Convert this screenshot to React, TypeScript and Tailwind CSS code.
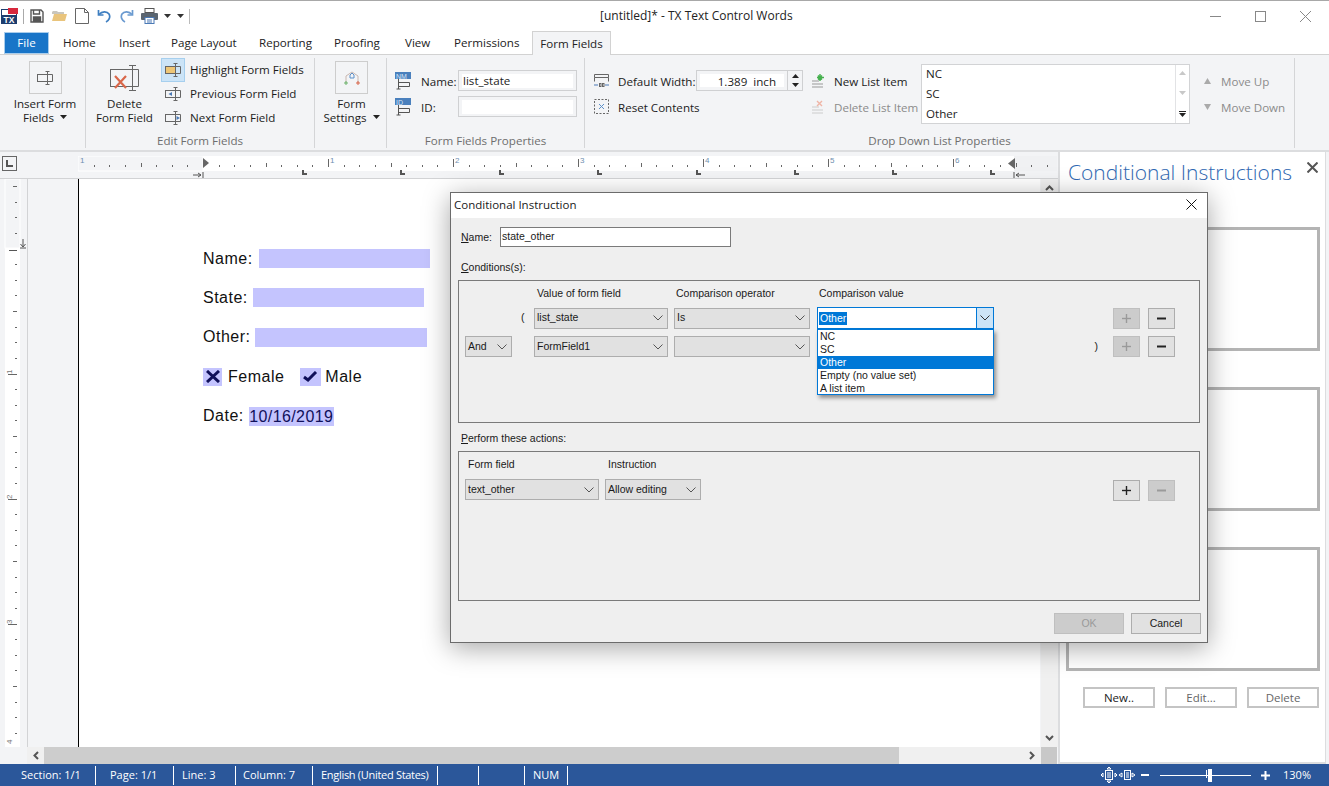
import React from "react";

const Caret = ({ c = "#222" }: { c?: string }) => (
  <svg width="7" height="4" viewBox="0 0 7 4" className="inline-block"><path d="M0 0h7L3.5 4z" fill={c} /></svg>
);
const Chev = ({ c = "#555" }: { c?: string }) => (
  <svg width="10" height="6" viewBox="0 0 10 6" fill="none" stroke={c}><path d="M0.5 0.5L5 5L9.5 0.5" /></svg>
);
const FieldGlyph = ({ fill = "none", arrow }: { fill?: string; arrow?: "l" | "r" }) => (
  <svg width="16" height="14" viewBox="0 0 16 14" fill="none" stroke="#666">
    <rect x="0.5" y="3.5" width="10" height="7" fill={fill} />
    <path d="M10.5 0.5V13.5M8.5 0.5h4M8.5 13.5h4M10.5 3.5h5v7h-5" />
    {arrow === "l" && <path d="M7 5v4L3.5 7z" fill="#4a79b5" stroke="none" />}
    {arrow === "r" && <path d="M11.5 5v4L15 7z" fill="#4a79b5" stroke="none" />}
  </svg>
);
const PropIcon = ({ t }: { t: string }) => (
  <svg width="17" height="18" viewBox="0 0 17 18" fill="none" stroke="#555">
    <path d="M0 0h16v7H0z" fill="#4a80bd" stroke="none" />
    <text x="1" y="6.5" fontSize="7" fill="#d7e6f7" stroke="none" fontFamily="Liberation Sans">{t}</text>
    <path d="M3.5 7v10M1.5 17h4M3.5 10.5h11v4h-11" />
  </svg>
);

const Tool = ({ children, w = "w-[23px]" }: { children: React.ReactNode; w?: string }) => (
  <div className={`${w} flex items-center justify-center shrink-0`}>{children}</div>
);

function TitleBar() {
  return (
    <div className="h-[31px] shrink-0 bg-white border-t border-[#a8a8a8] flex items-center text-[12px] text-[#222]">
      <div className="w-[190px] flex items-center pl-px">
        <svg width="17" height="16" viewBox="0 0 17 16" className="shrink-0">
          <rect x="0.5" y="1.5" width="15" height="14" fill="#fff" stroke="#1d3d6e" />
          <rect x="7" y="0" width="10" height="6" fill="#d8283c" />
          <rect x="1" y="7" width="14" height="8" fill="#1d3d6e" />
          <text x="2.5" y="14.5" fontSize="8.5" fontWeight="700" fill="#fff" fontFamily="Liberation Sans">TX</text>
        </svg>
        <div className="w-px h-[15px] bg-[#aaa] ml-[5px] mr-[6px]" />
        <Tool w="w-[14px]">
          <svg width="14" height="14" viewBox="0 0 14 14" fill="none" stroke="#555" strokeWidth="1.4">
            <path d="M1 1h10l2 2v10H1z" /><path d="M3.5 1v4h6V1" /><path d="M3.5 13V8h7v5" fill="#555" />
          </svg>
        </Tool>
        <div className="w-[9px]" />
        <Tool w="w-[15px]">
          <svg width="15" height="12" viewBox="0 0 15 12"><path d="M0 2l1-1h4l1 1h6v2H0z" fill="#c9c6bd" /><path d="M0 11l2-7h13l-2 7z" fill="#e9c47c" /></svg>
        </Tool>
        <div className="w-[8px]" />
        <Tool w="w-[14px]">
          <svg width="14" height="16" viewBox="0 0 14 16" fill="none" stroke="#666"><path d="M0.5 0.5h9l4 4v11H.5z" /><path d="M9.5 0.5v4h4" /></svg>
        </Tool>
        <div className="w-[9px]" />
        <Tool w="w-[14px]">
          <svg width="14" height="14" viewBox="0 0 14 14" fill="none" stroke="#3f7fc1" strokeWidth="1.7"><path d="M1.500 1v5h5" /><path d="M2 5.500C5 2 10 2 12 5c1.800 3-.2 6.500-3 8" /></svg>
        </Tool>
        <div className="w-[9px]" />
        <Tool w="w-[14px]">
          <svg width="14" height="14" viewBox="0 0 14 14" fill="none" stroke="#6a9ad0" strokeWidth="1.7"><path d="M12.500 1v5h-5" /><path d="M12 5.500C9 2 4 2 2 5c-1.800 3 .2 6.500 3 8" /></svg>
        </Tool>
        <div className="w-[8px]" />
        <Tool w="w-[17px]">
          <svg width="17" height="16" viewBox="0 0 17 16"><rect x="4" y="0.500" width="9" height="4" fill="none" stroke="#555" /><rect x="0" y="5" width="17" height="7" rx="1" fill="#5b6570" /><rect x="4" y="9.500" width="9" height="6" fill="#fff" stroke="#4a79b5" /><path d="M6 12h5M6 14h5" stroke="#4a79b5" /></svg>
        </Tool>
        <div className="ml-[6px] flex items-center gap-[6px]"><Caret c="#333" /><Caret c="#333" /></div>
        <div className="w-px h-[15px] bg-[#bbb] ml-[5px]" />
      </div>
      <div className="pl-[410px] whitespace-nowrap">[untitled]* - TX Text Control Words</div>
      <div className="ml-auto flex items-center pr-[18px] gap-[34px]">
        <svg width="11" height="11" viewBox="0 0 11 11" stroke="#888"><path d="M0 5.500h11" /></svg>
        <svg width="11" height="11" viewBox="0 0 11 11" fill="none" stroke="#888"><rect x="0.500" y="0.500" width="10" height="10" /></svg>
        <svg width="11" height="11" viewBox="0 0 11 11" stroke="#888"><path d="M0 0l11 11M11 0L0 11" /></svg>
      </div>
    </div>
  );
}

function Tabs() {
  const tabs: [string, string][] = [
    ["Home", "w-[56px]"], ["Insert", "w-[52px]"], ["Page Layout", "w-[88px]"], ["Reporting", "w-[75px]"],
    ["Proofing", "w-[71px]"], ["View", "w-[49px]"], ["Permissions", "w-[83px]"],
  ];
  return (
    <div className="h-[24px] shrink-0 bg-white border-b border-[#d2d2d2] flex items-stretch text-[11.6px] text-[#222]">
      <div className="ml-[4px] w-[45px] bg-[#1975c8] border border-[#a9cdec] text-white flex items-center justify-center mt-px">File</div>
      <div className="w-[9px]" />
      {tabs.map(([t, w]) => (
        <div key={t} className={`${w} flex items-center pl-[5px] whitespace-nowrap`}>{t}</div>
      ))}
      <div className="w-[79px] -mb-px bg-[#f3f4f6] border border-b-0 border-[#d2d2d2] flex items-center justify-center whitespace-nowrap z-10">Form Fields</div>
    </div>
  );
}

const Group = ({ w, label, children }: { w: string; label: string; children: React.ReactNode }) => (
  <div className={`${w} shrink-0 h-[90px] mt-[3px] border-r border-[#d4d5d7] flex flex-col`}>
    <div className="h-[75px] relative flex">{children}</div>
    <div className="h-[15px] text-center text-[#6e6e6e] leading-[15px] whitespace-nowrap">{label}</div>
  </div>
);
const Inset = ({ w, children }: { w: string; children?: React.ReactNode }) => (
  <div className={`${w} h-[21px] border border-[#cfd0d2] p-[3px] flex items-center`}>
    <div className="bg-white h-[14px] flex-1 flex items-center pl-px pt-px leading-none whitespace-nowrap">{children}</div>
  </div>
);

function Ribbon() {
  return (
    <div className="h-[97px] shrink-0 bg-[#f3f4f6] border-b-2 border-[#dcdddf] flex text-[11.6px] text-[#1c1c1c] leading-[14px]">
      <Group w="w-[86px]" label="">
        <div className="w-full flex flex-col items-center pt-[3px] pl-[5px]">
          <div className="w-[33px] h-[33px] border border-[#cdcdcd] flex items-center justify-center mb-[3px]"><FieldGlyph /></div>
          <div className="whitespace-nowrap">Insert Form</div>
          <div>Fields <span className="ml-[3px] relative -top-[2px]"><Caret /></span></div>
        </div>
      </Group>
      <Group w="w-[229px]" label="Edit Form Fields">
        <div className="w-[75px] flex flex-col items-center pl-[2px] pt-[7px]">
          <svg width="30" height="26" viewBox="0 0 30 26" fill="none" stroke="#666" className="mb-[6px]">
            <rect x="0.500" y="4.500" width="22" height="17" />
            <path d="M22.500 .5V25.500M19 .5h7M19 25.500h7M22.500 4.500h6v17h-6" />
            <path d="M5 11l11 12M16 11L5 23" stroke="#d9674a" strokeWidth="2.200" />
          </svg>
          <div>Delete</div>
          <div className="whitespace-nowrap">Form Field</div>
        </div>
        <div className="flex flex-col">
          {[["Highlight Form Fields", "#eec676", undefined], ["Previous Form Field", "none", "l"], ["Next Form Field", "none", "r"]].map(([t, f, a], i) => (
            <div key={String(t)} className="h-[24px] flex items-center">
              <div className={`w-[24px] h-[24px] flex items-center justify-center border ${i === 0 ? "bg-[#cce4f7] border-[#a6cfee]" : "border-transparent"}`}>
                <FieldGlyph fill={f as string} arrow={a as "l" | "r" | undefined} />
              </div>
              <span className="ml-[5px] whitespace-nowrap">{t}</span>
            </div>
          ))}
        </div>
      </Group>
      <Group w="w-[72px]" label="">
        <div className="w-full flex flex-col items-center pt-[3px] pl-[2px]">
          <div className="w-[33px] h-[33px] border border-[#cdcdcd] flex items-center justify-center mb-[3px]">
            <svg width="16" height="16" viewBox="0 0 16 16" fill="none">
              <path d="M2 13V6l6-4 6 4v7" stroke="#c9b7b0" /><path d="M6 5l2-2 2 2v3H6z" stroke="#5b8fc9" />
              <path d="M1 12h2v2H1z" stroke="#6bb36b" /><path d="M13 12h2v2h-2z" stroke="#d9674a" />
            </svg>
          </div>
          <div>Form</div>
          <div>Settings <span className="ml-[3px] relative -top-[2px]"><Caret /></span></div>
        </div>
      </Group>
      <Group w="w-[198px]" label="Form Fields Properties">
        <div className="flex flex-col pl-[8px] pt-[12px] gap-[5px]">
          <div className="flex items-center h-[21px]">
            <PropIcon t="NM" />
            <span className="ml-[9px] w-[37px] pt-[2px]">Name:</span>
            <Inset w="w-[119px]">list_state</Inset>
          </div>
          <div className="flex items-center h-[21px]">
            <PropIcon t="ID" />
            <span className="ml-[9px] w-[37px] pt-[2px]">ID:</span>
            <Inset w="w-[119px]" />
          </div>
        </div>
      </Group>
      <Group w="w-[710px]" label="Drop Down List Properties">
        <div className="w-[227px] flex flex-col pl-[9px] pt-[12px] gap-[5px] shrink-0">
          <div className="flex items-center h-[21px]">
            <svg width="15" height="14" viewBox="0 0 15 14" fill="none" stroke="#666" className="shrink-0">
              <path d="M.5 .5h14v3H.5zM.5 3.500v4M14.500 3.500v4" /><path d="M0 11h4M11 11h4" stroke="#4a79b5" /><rect x="5.500" y="9.500" width="1.500" height="3" /><rect x="8.500" y="9.500" width="1.500" height="3" />
            </svg>
            <span className="ml-[9px] w-[78px] pt-[2px] whitespace-nowrap">Default Width:</span>
            <div className="w-[107px] h-[21px] border border-[#cfd0d2] flex">
              <div className="flex-1 m-[3px] bg-white text-right pr-[8px] leading-[15px] whitespace-pre">1.389  inch</div>
              <div className="w-[15px] border-l border-[#cfd0d2] flex flex-col items-center justify-center gap-[5px]">
                <svg width="7" height="4" viewBox="0 0 7 4"><path d="M3.500 0L7 4H0z" fill="#222" /></svg>
                <Caret />
              </div>
            </div>
          </div>
          <div className="flex items-center h-[21px]">
            <svg width="15" height="15" viewBox="0 0 15 15" fill="none" stroke="#666" strokeDasharray="2 1.500" className="shrink-0">
              <rect x="0.500" y="0.500" width="14" height="14" /><path d="M5 5l5 5M10 5l-5 5" stroke="#5b8fc9" strokeDasharray="none" />
            </svg>
            <span className="ml-[9px] pt-[2px] whitespace-nowrap">Reset Contents</span>
          </div>
        </div>
        <div className="w-[109px] flex flex-col pt-[12px] gap-[5px] shrink-0">
          <div className="flex items-center h-[21px]">
            <svg width="13" height="14" viewBox="0 0 13 14" className="shrink-0"><path d="M0 7h7M0 10h11M0 13h11" stroke="#999" /><path d="M8 0v7M5 3.500h7M6 1.500l4 4M10 1.500l-4 4" stroke="#45b04e" strokeWidth="1.400" /></svg>
            <span className="ml-[9px] pt-[2px] whitespace-nowrap">New List Item</span>
          </div>
          <div className="flex items-center h-[21px] text-[#8b8b8b]">
            <svg width="13" height="14" viewBox="0 0 13 14" className="shrink-0"><path d="M0 7h7M0 10h11M0 13h11" stroke="#ccc" /><path d="M5 1l5 5M10 1L5 6" stroke="#efb5a6" strokeWidth="1.400" /></svg>
            <span className="ml-[9px] pt-[2px] whitespace-nowrap">Delete List Item</span>
          </div>
        </div>
        <div className="w-[269px] h-[60px] mt-[6px] bg-white border border-[#d2d3d5] flex shrink-0">
          <div className="flex-1 pl-[4px] flex flex-col justify-between leading-[20px] -mt-px pb-px"><div>NC</div><div>SC</div><div>Other</div></div>
          <div className="w-[14px] border-l border-[#e2e3e5] flex flex-col items-center justify-between py-[6px]">
            <svg width="7" height="4" viewBox="0 0 7 4"><path d="M3.500 0L7 4H0z" fill="#c8c8c8" /></svg>
            <Caret c="#c8c8c8" />
            <svg width="7" height="6" viewBox="0 0 7 6"><path d="M0 0h7v1H0zM0 2h7L3.500 6z" fill="#222" /></svg>
          </div>
        </div>
        <div className="pl-[14px] flex flex-col pt-[12px] gap-[5px] text-[#8b8b8b]">
          <div className="flex items-center h-[21px]">
            <svg width="7" height="6" viewBox="0 0 7 6"><path d="M3.500 0L7 6H0z" fill="#aaa" /></svg>
            <span className="ml-[10px] pt-[2px] whitespace-nowrap">Move Up</span>
          </div>
          <div className="flex items-center h-[21px]">
            <svg width="7" height="6" viewBox="0 0 7 6"><path d="M0 0h7L3.500 6z" fill="#aaa" /></svg>
            <span className="ml-[10px] pt-[2px] whitespace-nowrap">Move Down</span>
          </div>
        </div>
      </Group>
    </div>
  );
}

const Tab = ({ x, y }: { x: number; y: number }) => (
  <path d={`M${x} ${y}h2v3h3v2h-5z`} fill="#555" />
);

function HRuler() {
  const xs = Array.from({ length: 68 }, (_, i) => -8 * 15.625 + i * 15.625);
  const nums: [string, number][] = [["1", 0], ["1", 250], ["2", 375], ["3", 500], ["4", 625], ["5", 750], ["6", 875]];
  return (
    <svg width="979" height="22" viewBox="0 0 979 22" className="block">
      <rect x="0" y="0" width="125" height="15" fill="#f3f4f6" stroke="#fff" />
      <rect x="125" y="0" width="811" height="15" fill="#fff" />
      <rect x="936" y="0" width="43" height="15" fill="#f0f1f3" />
      {xs.map((v, i) => {
        const x = Math.round(125 + v);
        if (x < 2 || x > 975 || i === 8) return null;
        const k = i % 8;
        if (k === 0) return <rect key={i} x={x} y={3} width={1} height={8} fill="#666" />;
        if (k === 4) return <rect key={i} x={x} y={7} width={1} height={4} fill="#666" />;
        return <rect key={i} x={x} y={9} width={1} height={2} fill="#666" />;
      })}
      {nums.map(([t, x], i) => (
        <text key={i} x={x + 2} y={7} fontSize="8" fill="#6f8fb0" fontFamily="Liberation Sans">{t}</text>
      ))}
      {[224, 322, 421, 519, 618, 716, 814, 912].map((x) => <Tab key={x} x={x} y={14} />)}
      <path d="M125 2l6 5-6 5z" fill="#666" />
      <path d="M937 2l-7 5.500 7 5.500z" fill="#666" />
      <path d="M115 19h8M120 17l3 2-3 2M125 16v6" stroke="#555" fill="none" />
      <path d="M936 16v6M947 19h-9M941 17l-3 2 3 2" stroke="#555" fill="none" />
    </svg>
  );
}

function VRuler() {
  const ys = Array.from({ length: 40 }, (_, i) => i);
  return (
    <svg width="27" height="569" viewBox="0 0 27 569" className="block shrink-0">
      <rect x="5" y="0" width="15" height="69" fill="#f3f4f6" stroke="#fff" />
      <rect x="5" y="69" width="15" height="500" fill="#fff" />
      {ys.map((i) => {
        const y = Math.round(7 + i * 15.625);
        if (y > 566) return null;
        const k = (i - 4) % 8;
        if (i === 4) return <rect key={i} x={9} y={y + 1} width={8} height={1} fill="#555" />;
        if (k === 0) return <rect key={i} x={8} y={y} width={9} height={1} fill="#666" />;
        if (k === 4 || k === -4) return <rect key={i} x={13} y={y} width={4} height={1} fill="#666" />;
        return <rect key={i} x={15} y={y} width={2} height={1} fill="#666" />;
      })}
      {[["1", 195], ["2", 320], ["3", 445], ["4", 570]].map(([t, y]) => (
        <text key={t} x={0} y={0} fontSize="8" fill="#777" fontFamily="Liberation Sans" transform={`translate(12 ${Number(y) - (t === "4" ? 5 : 0)}) rotate(-90)`}>{t}</text>
      ))}
      <path d="M23 60v8M20.500 65l2.500 3 2.500-3M20 69h6" stroke="#555" fill="none" />
    </svg>
  );
}

const Blue = "bg-[#c4c4fe]";
const DocRow = ({ children }: { children: React.ReactNode }) => (
  <div className="h-[19px] mb-[20.4px] flex items-center whitespace-nowrap">{children}</div>
);

function Page() {
  return (
    <div className="flex-1 bg-white border-l border-black pl-[124px] pt-[70px] font-['Liberation_Sans',Arial,sans-serif] text-[16px] tracking-[0.5px] text-[#111] overflow-hidden">
      <DocRow>Name:<div className={`${Blue} w-[171px] h-[19px] ml-[6px]`} /></DocRow>
      <DocRow>State:<div className={`${Blue} w-[171px] h-[19px] ml-[5px]`} /></DocRow>
      <DocRow>Other:<div className={`${Blue} w-[172px] h-[19px] ml-[5px]`} /></DocRow>
      <DocRow>
        <div className={`${Blue} w-[19px] h-[18px] flex items-center justify-center`}>
          <svg width="14" height="13" viewBox="0 0 14 13" stroke="#10105a" strokeWidth="3"><path d="M1 1l12 11M13 1L1 12" /></svg>
        </div>
        <span className="ml-[6px]">Female</span>
        <div className={`${Blue} w-[21px] h-[18px] ml-[16px] flex items-center justify-center`}>
          <svg width="15" height="11" viewBox="0 0 15 11" fill="none" stroke="#10105a" strokeWidth="3"><path d="M1 6l4 3 8-8" /></svg>
        </div>
        <span className="ml-[4px]">Male</span>
      </DocRow>
      <DocRow>Date:<span className={`${Blue} ml-[5px] w-[85px] text-center h-[19px] leading-[19px] tracking-[0.4px] text-[#10105a]`}>10/16/2019</span></DocRow>
    </div>
  );
}

function Workspace() {
  return (
    <div className="w-[1058px] shrink-0 flex flex-col">
      <div className="h-[26px] shrink-0 flex bg-[#f3f4f6]">
        <div className="ml-[2px] mt-[4px] w-[15px] h-[15px] border border-[#666] flex items-center justify-center">
          <svg width="7" height="7" viewBox="0 0 7 7"><path d="M0 0h2v5h5v2H0z" fill="#555" /></svg>
        </div>
        <div className="ml-[61px] mt-[4px]"><HRuler /></div>
      </div>
      <div className="flex-1 flex min-h-0 border-t border-[#d2d3d5]">
        <VRuler />
        <div className="w-[51px] bg-[#f3f4f6] border-l border-[#d2d3d5]" />
        <Page />
        <div className="w-[17px] ml-px bg-[#f0f0f0] flex flex-col items-center justify-between py-[6px] shrink-0">
          <svg width="9" height="6" viewBox="0 0 9 6" fill="none" stroke="#555" strokeWidth="2"><path d="M1 5l3.500-3.500L8 5" /></svg>
          <svg width="9" height="6" viewBox="0 0 9 6" fill="none" stroke="#555" strokeWidth="2"><path d="M1 1l3.500 3.500L8 1" /></svg>
        </div>
      </div>
      <div className="h-[17px] shrink-0 flex bg-[#f3f4f6]">
        <div className="w-[27px]" />
        <div className="w-[1014px] bg-[#f0f0f0] flex items-center">
          <div className="w-[17px] flex justify-center">
            <svg width="6" height="9" viewBox="0 0 6 9" fill="none" stroke="#555" strokeWidth="2"><path d="M5 1L1.500 4.500 5 8" /></svg>
          </div>
          <div className="w-[855px] h-full bg-[#cdcdcd]" />
          <div className="flex-1 flex justify-end pr-[6px]">
            <svg width="6" height="9" viewBox="0 0 6 9" fill="none" stroke="#555" strokeWidth="2"><path d="M1 1l3.500 3.500L1 8" /></svg>
          </div>
        </div>
        <div className="w-[16px] bg-[#c8c8c8]" />
      </div>
    </div>
  );
}

function SidePanel() {
  const Box = () => <div className="h-[124px] w-[254px] border-[3px] border-[#b4b4b4] bg-white" />;
  const Btn = ({ t, dim }: { t: string; dim?: boolean }) => (
    <div className={`w-[72px] h-[21px] border-2 border-[#c4c4c4] bg-white flex items-center justify-center ${dim ? "text-[#666]" : "text-[#222]"}`}>{t}</div>
  );
  return (
    <div className="w-[268px] shrink-0 bg-white border-l-2 border-b-2 border-r border-[#dcdddf] pl-[6px] relative text-[11.5px]">
      <div className="h-[38px] pt-[2px] pl-[2px] text-[21px] font-light leading-[37px] text-[#2f68b2] whitespace-nowrap">Conditional Instructions</div>
      <svg width="11" height="11" viewBox="0 0 11 11" stroke="#555" strokeWidth="2" className="absolute top-[10px] right-[7px]"><path d="M0.500 0.500l10 10M10.500 0.500l-10 10" /></svg>
      <div className="pt-[37px] flex flex-col gap-[36px]"><Box /><Box /><Box /></div>
      <div className="mt-[16px] pl-[17px] flex gap-[10px]"><Btn t="New.." /><Btn t="Edit..." dim /><Btn t="Delete" dim /></div>
    </div>
  );
}

function StatusBar() {
  const items: [string, string][] = [
    ["Section: 1/1", "w-[96px] pl-[21px]"], ["Page: 1/1", "w-[78px] pl-[14px]"], ["Line: 3", "w-[62px] pl-[8px]"],
    ["Column: 7", "w-[77px] pl-[7px]"], ["English (United States)", "w-[125px] pl-[8px] tracking-[-0.3px]"], ["", "w-[41px]"], ["", "w-[46px]"], ["NUM", "w-[43px] pl-[8px]"],
  ];
  return (
    <div className="h-[22px] shrink-0 bg-[#2b579a] text-white text-[11px] flex items-center">
      {items.map(([t, c], i) => (
        <div key={i} className={`${c} h-[19px] border-r border-white flex items-center whitespace-nowrap`}>{t}</div>
      ))}
      <div className="ml-auto flex items-center pr-[18px]">
        <svg width="34" height="16" viewBox="0 0 34 16" fill="none" stroke="#fff">
          <rect x="4.500" y="3.500" width="7" height="9" /><path d="M6 6h4M6 8h4M6 10h4M8 0l2 2H6zM8 16l-2-2h4zM0 8l2-2v4zM16 8l-2-2v4z" />
          <rect x="23.500" y="3.500" width="6" height="9" /><path d="M25 6h3M25 8h3M25 10h3M18 8l3-2v4zM34 8l-3-2v4z" />
        </svg>
        <div className="ml-[6px] w-[8px] h-[2px] bg-white" />
        <div className="ml-[11px] w-[91px] h-px bg-white relative">
          <div className="absolute -top-[5px] left-[46px] w-px h-[8px] bg-white" />
          <div className="absolute -top-[6px] left-[48px] w-[4px] h-[13px] bg-white" />
        </div>
        <svg width="9" height="9" viewBox="0 0 9 9" fill="#fff" className="ml-[10px]"><path d="M3.500 0h2v3.500H9v2H5.500V9h-2V5.500H0v-2h3.500z" /></svg>
        <span className="ml-[13px]">130%</span>
      </div>
    </div>
  );
}

const Sel = ({ w, t }: { w: string; t?: string }) => (
  <div className={`${w} h-[21px] bg-[#e1e1e1] border border-[#adadad] flex items-center justify-between pl-[2px] pr-[4px] shrink-0`}>
    <span className="whitespace-nowrap">{t}</span>
    <Chev />
  </div>
);
const Sq = ({ t, off }: { t: "+" | "-"; off?: boolean }) => (
  <div className={`w-[27px] h-[21px] border flex items-center justify-center shrink-0 ${off ? "bg-[#cccccc] border-[#bfbfbf]" : "bg-[#e1e1e1] border-[#adadad]"}`}>
    <svg width="9" height="9" viewBox="0 0 9 9" stroke={off ? "#9a9a9a" : "#222"} strokeWidth={t === "-" ? 2 : 1.400}>
      <path d="M0 4.500h9" />{t === "+" && <path d="M4.500 0v9" />}
    </svg>
  </div>
);

function Dialog() {
  return (
    <div className="absolute left-[450px] top-[192px] w-[758px] h-[451px] border border-[#6b6b6b] bg-[#efefef] shadow-[0_5px_25px_rgba(0,0,0,0.35)] flex flex-col font-['Liberation_Sans',Arial,sans-serif] text-[10.5px] text-[#1a1a1a]">
      <div className="h-[25px] pb-[2px] bg-white flex items-center justify-between pl-[3px] pr-[10px] text-[11.5px] font-['Open_Sans',sans-serif] shrink-0">
        <span>Conditional Instruction</span>
        <svg width="11" height="11" viewBox="0 0 11 11" stroke="#111"><path d="M0.500 0.500l10 10M10.500 0.500l-10 10" /></svg>
      </div>
      <div className="flex-1 px-[7px]">
        <div className="flex items-center mt-[9px] h-[20px]">
          <span className="ml-[3px] w-[39px] pt-[2px]"><span className="underline">N</span>ame:</span>
          <div className="w-[231px] h-[20px] bg-white border border-[#7a7a7a] flex items-center pl-[1px]">state_other</div>
        </div>
        <div className="ml-[3px] mt-[14px] h-[13px] leading-[13px]"><span className="underline">C</span>onditions(s):</div>
        <div className="relative mt-[6px] w-[742px] h-[143px] border border-[#7a7a7a]">
          <div className="flex mt-[6px] h-[14px] items-center">
            <span className="ml-[78px] w-[139px]">Value of form field</span>
            <span className="w-[143px]">Comparison operator</span>
            <span>Comparison value</span>
          </div>
          <div className="flex mt-[6px] items-center">
            <span className="ml-[62px] w-[13px]">(</span>
            <Sel w="w-[134px]" t="list_state" />
            <div className="w-[6px]" />
            <Sel w="w-[136px]" t="Is" />
            <div className="w-[7px]" />
            <div className="w-[177px] h-[22px] bg-white border border-[#0078d7] flex items-center justify-between shrink-0">
              <span className="ml-[1px] bg-[#0078d7] text-white px-px leading-[13px]">Other</span>
              <div className="w-[17px] h-full bg-[#cce4f7] border-l border-[#0078d7] flex items-center justify-center"><Chev c="#333" /></div>
            </div>
            <div className="w-[119px]" />
            <Sq t="+" off />
            <div className="w-[8px]" />
            <Sq t="-" />
          </div>
          <div className="flex mt-[7px] items-center">
            <div className="ml-[6px] w-[69px] shrink-0"><Sel w="w-[47px]" t="And" /></div>
            <Sel w="w-[134px]" t="FormField1" />
            <div className="w-[6px]" />
            <Sel w="w-[136px]" />
            <div className="w-[303px] shrink-0 text-right pr-[15px]">)</div>
            <Sq t="+" off />
            <div className="w-[8px]" />
            <Sq t="-" />
          </div>
          <div className="absolute left-[358px] top-[48px] w-[177px] h-[66px] bg-white border border-[#0078d7] shadow-[2px_3px_4px_rgba(0,0,0,0.4)] leading-[13px] z-10">
            <div className="pl-[2px]">NC</div>
            <div className="pl-[2px]">SC</div>
            <div className="pl-[2px] bg-[#0078d7] text-white">Other</div>
            <div className="pl-[2px]">Empty (no value set)</div>
            <div className="pl-[2px]">A list item</div>
          </div>
        </div>
        <div className="ml-[3px] mt-[9px] h-[13px] leading-[13px]"><span className="underline">P</span>erform these actions:</div>
        <div className="mt-[6px] w-[742px] h-[150px] border border-[#7a7a7a]">
          <div className="flex mt-[6px] h-[14px] items-center">
            <span className="ml-[9px] w-[140px]">Form field</span>
            <span>Instruction</span>
          </div>
          <div className="flex mt-[6px] items-center">
            <div className="w-[6px]" />
            <Sel w="w-[134px]" t="text_other" />
            <div className="w-[6px]" />
            <Sel w="w-[96px]" t="Allow editing" />
            <div className="w-[412px]" />
            <div className="flex pt-[2px]">
              <Sq t="+" />
              <div className="w-[8px]" />
              <Sq t="-" off />
            </div>
          </div>
        </div>
        <div className="mt-[12px] -mr-px flex justify-end gap-[7px]">
          <div className="w-[70px] h-[21px] bg-[#cccccc] border border-[#bfbfbf] text-[#9a9a9a] flex items-center justify-center">OK</div>
          <div className="w-[70px] h-[21px] bg-[#e1e1e1] border border-[#adadad] flex items-center justify-center">Cancel</div>
        </div>
      </div>
    </div>
  );
}

export default function App() {
  return (
    <div className="relative w-[1329px] h-[786px] overflow-hidden flex flex-col bg-[#f3f4f6] font-['Open_Sans',sans-serif]">
      <TitleBar />
      <Tabs />
      <Ribbon />
      <div className="flex-1 flex min-h-0">
        <Workspace />
        <SidePanel />
      </div>
      <StatusBar />
      <Dialog />
    </div>
  );
}
